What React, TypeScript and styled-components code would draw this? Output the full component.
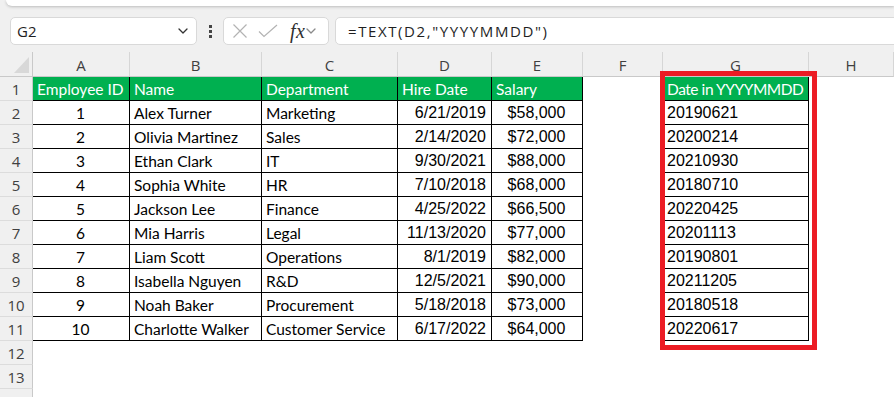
import { Fragment } from 'react';
import styled, { createGlobalStyle } from 'styled-components';

const GlobalStyle = createGlobalStyle`
  html, body {
    margin: 0;
    padding: 0;
    background: #f0f0f0;
  }
  body {
    font-family: 'Open Sans', 'Noto Sans', sans-serif;
  }
`;

const Page = styled.div`
  width: 894px;
  height: 397px;
  overflow: hidden;
  background: #f0f0f0;
  display: flex;
  flex-direction: column;

  & > * {
    flex-shrink: 0;
  }
`;

const TopStrip = styled.div`
  height: 6px;
  margin-left: 6px;
  background: #fff;
  border-bottom-left-radius: 8px;
  box-shadow: 0 1px 3px rgba(0, 0, 0, 0.22);
`;

const FormulaBar = styled.div`
  display: flex;
  align-items: center;
  height: 28px;
  margin-top: 11px;
  padding-left: 10px;
`;

const Box = styled.div`
  box-sizing: border-box;
  height: 28px;
  background: #fff;
  border: 1px solid #d9d9d9;
  border-radius: 5px;
  display: flex;
  align-items: center;
`;

const NameBox = styled(Box)`
  width: 187px;
  padding: 0 8px 0 6px;
  justify-content: space-between;
  font-size: 15px;
  color: #1f1f1f;
`;

const Dots = styled.div`
  display: flex;
  flex-direction: column;
  gap: 2px;
  margin: 0 11px 0 12px;

  span {
    width: 3px;
    height: 3px;
    background: #444;
  }
`;

const FxBox = styled(Box)`
  width: 106px;
  padding: 0 4px 0 8px;
`;

const Fx = styled.span`
  font-family: 'Liberation Serif', serif;
  font-style: italic;
  font-size: 20px;
  color: #303030;
  margin: 0 1px 0 12px;
  letter-spacing: 0.5px;
`;

const FormulaInput = styled(Box)`
  flex: 1;
  margin-left: 6px;
  margin-right: -8px;
  padding-left: 12px;
  font-size: 15px;
  letter-spacing: 1.6px;
  color: #1f1f1f;
`;

const Sheet = styled.div`
  position: relative;
  margin-top: 7px;
  display: grid;
  grid-template-columns: 33px 97px 132px 136px 94px 91px 80px 146px 1fr;
  grid-template-rows: 25px repeat(14, 24px);
  background: #fff;
`;

const Corner = styled.div`
  position: relative;
  background: #f0f0f0;
  border-right: 1px solid #c9c9c9;
  border-bottom: 1px solid #c9c9c9;

  &::after {
    content: '';
    position: absolute;
    right: 3px;
    bottom: 3px;
    width: 15px;
    height: 16px;
    background: #d8d8d8;
    clip-path: polygon(100% 0, 100% 100%, 0 100%);
  }
`;

const ColHead = styled.div`
  box-sizing: border-box;
  background: #f0f0f0;
  border-right: 1px solid #d6d6d6;
  border-bottom: 1px solid #c9c9c9;
  display: flex;
  align-items: center;
  justify-content: center;
  font-size: 15px;
  color: #404040;
  padding-top: 2px;
`;

const RowHead = styled.div`
  box-sizing: border-box;
  background: #f0f0f0;
  border-right: 1px solid #c9c9c9;
  border-bottom: 1px solid #dcdcdc;
  display: flex;
  align-items: center;
  justify-content: center;
  font-size: 15px;
  color: #404040;
`;

const Cell = styled.div<{
  $align?: 'left' | 'center' | 'right';
  $arial?: boolean;
  $title?: boolean;
  $tight?: boolean;
}>`
  box-sizing: border-box;
  border-right: 1px solid #000;
  border-bottom: 1px solid #000;
  background: ${({ $title }) => ($title ? '#00b050' : '#fff')};
  color: ${({ $title }) => ($title ? '#fff' : '#000')};
  font-family: ${({ $arial }) => ($arial ? "'Liberation Sans', Arial, sans-serif" : "Lato, 'Open Sans', sans-serif")};
  font-size: ${({ $arial }) => ($arial ? '16px' : '15.5px')};
  letter-spacing: ${({ $tight }) => ($tight ? '-0.45px' : 'normal')};
  display: flex;
  align-items: center;
  justify-content: ${({ $align }) =>
    $align === 'center' ? 'center' : $align === 'right' ? 'flex-end' : 'flex-start'};
  padding: 1px 5px 0 4px;
  white-space: nowrap;
  overflow: hidden;
`;

const Blank = styled.div<{ $span?: boolean }>`
  ${({ $span }) => ($span ? 'grid-column: 2 / -1;' : '')}
  background: #fff;
`;

const Highlight = styled.div`
  position: absolute;
  left: 660px;
  top: 19px;
  width: 157px;
  height: 279px;
  box-sizing: border-box;
  border: 5px solid #ec1c24;
  pointer-events: none;
`;

const columns = ['A', 'B', 'C', 'D', 'E', 'F', 'G', 'H'];

const titles = ['Employee ID', 'Name', 'Department', 'Hire Date', 'Salary'];

const rows: [number, string, string, string, string, string][] = [
  [1, 'Alex Turner', 'Marketing', '6/21/2019', '$58,000', '20190621'],
  [2, 'Olivia Martinez', 'Sales', '2/14/2020', '$72,000', '20200214'],
  [3, 'Ethan Clark', 'IT', '9/30/2021', '$88,000', '20210930'],
  [4, 'Sophia White', 'HR', '7/10/2018', '$68,000', '20180710'],
  [5, 'Jackson Lee', 'Finance', '4/25/2022', '$66,500', '20220425'],
  [6, 'Mia Harris', 'Legal', '11/13/2020', '$77,000', '20201113'],
  [7, 'Liam Scott', 'Operations', '8/1/2019', '$82,000', '20190801'],
  [8, 'Isabella Nguyen', 'R&D', '12/5/2021', '$90,000', '20211205'],
  [9, 'Noah Baker', 'Procurement', '5/18/2018', '$73,000', '20180518'],
  [10, 'Charlotte Walker', 'Customer Service', '6/17/2022', '$64,000', '20220617'],
];

const Chevron = ({ size = 10, color = '#333' }: { size?: number; color?: string }) => (
  <svg width={size} height={size * 0.6} viewBox="0 0 10 6" fill="none">
    <path d="M1 1l4 4 4-4" stroke={color} strokeWidth="1.3" strokeLinecap="round" strokeLinejoin="round" />
  </svg>
);

export default function App() {
  return (
    <>
      <GlobalStyle />
      <Page>
        <TopStrip />
        <FormulaBar>
          <NameBox>
            <span>G2</span>
            <Chevron />
          </NameBox>
          <Dots>
            <span />
            <span />
            <span />
          </Dots>
          <FxBox>
            <svg width="16" height="16" viewBox="0 0 16 16" fill="none">
              <path d="M1.5 1.5l13 13M14.5 1.5l-13 13" stroke="#b3b3b3" strokeWidth="1.2" />
            </svg>
            <svg width="20" height="14" viewBox="0 0 20 14" fill="none" style={{ marginLeft: 10 }}>
              <path d="M1 7.5l5 5L19 1" stroke="#b3b3b3" strokeWidth="1.2" />
            </svg>
            <Fx>fx</Fx>
            <Chevron size={10} color="#8a8a8a" />
          </FxBox>
          <FormulaInput>=TEXT(D2,"YYYYMMDD")</FormulaInput>
        </FormulaBar>
        <Sheet>
          <Corner />
          {columns.map(c => (
            <ColHead key={c}>{c}</ColHead>
          ))}

          <RowHead>1</RowHead>
          {titles.map(t => (
            <Cell key={t} $title>
              {t}
            </Cell>
          ))}
          <Blank />
          <Cell $title $tight>
            Date in YYYYMMDD
          </Cell>
          <Blank />

          {rows.map(([id, name, dept, hire, salary, ymd], i) => (
            <Fragment key={id}>
              <RowHead>{i + 2}</RowHead>
              <Cell $align="center">{id}</Cell>
              <Cell>{name}</Cell>
              <Cell>{dept}</Cell>
              <Cell $align="right" $arial>
                {hire}
              </Cell>
              <Cell $align="center" $arial>
                {salary}
              </Cell>
              <Blank />
              <Cell $arial>{ymd}</Cell>
              <Blank />
            </Fragment>
          ))}

          {[12, 13, 14].map(n => (
            <Fragment key={n}>
              <RowHead>{n}</RowHead>
              <Blank $span />
            </Fragment>
          ))}
          <Highlight />
        </Sheet>
      </Page>
    </>
  );
}
